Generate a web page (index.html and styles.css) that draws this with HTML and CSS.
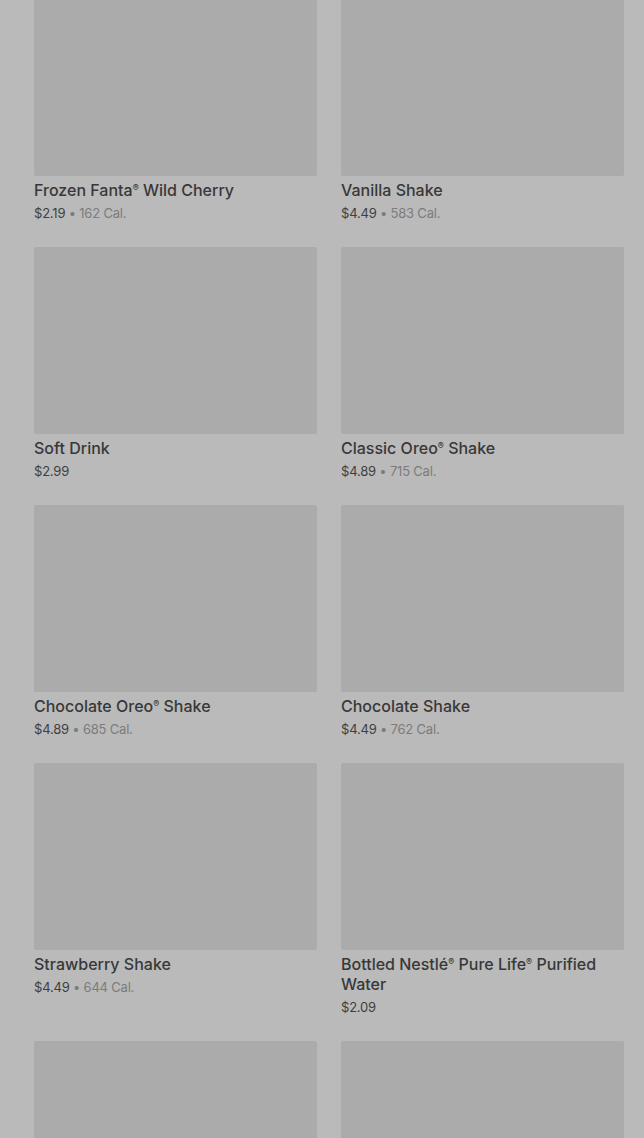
FILE: index.html
```html
<!DOCTYPE html>
<html lang="en">
<head>
    <meta charset="UTF-8">
    <meta name="viewport" content="width=device-width, initial-scale=1.0">
    <title>Drinks</title>
    <link rel="stylesheet" href="styles.css">
</head>
<body>
    <div class="menu-grid">
        <div class="item">
            <div class="item-image"></div>
            <div class="item-name">Frozen Fanta<span class="reg">®</span> Wild Cherry</div>
            <div class="item-meta">$2.19 <span class="cal">• 162 Cal.</span></div>
        </div>
        <div class="item">
            <div class="item-image"></div>
            <div class="item-name">Vanilla Shake</div>
            <div class="item-meta">$4.49 <span class="cal">• 583 Cal.</span></div>
        </div>
        <div class="item">
            <div class="item-image"></div>
            <div class="item-name">Soft Drink</div>
            <div class="item-meta">$2.99</div>
        </div>
        <div class="item">
            <div class="item-image"></div>
            <div class="item-name">Classic Oreo<span class="reg">®</span> Shake</div>
            <div class="item-meta">$4.89 <span class="cal">• 715 Cal.</span></div>
        </div>
        <div class="item">
            <div class="item-image"></div>
            <div class="item-name">Chocolate Oreo<span class="reg">®</span> Shake</div>
            <div class="item-meta">$4.89 <span class="cal">• 685 Cal.</span></div>
        </div>
        <div class="item">
            <div class="item-image"></div>
            <div class="item-name">Chocolate Shake</div>
            <div class="item-meta">$4.49 <span class="cal">• 762 Cal.</span></div>
        </div>
        <div class="item">
            <div class="item-image"></div>
            <div class="item-name">Strawberry Shake</div>
            <div class="item-meta">$4.49 <span class="cal">• 644 Cal.</span></div>
        </div>
        <div class="item">
            <div class="item-image"></div>
            <div class="item-name">Bottled Nestlé<span class="reg">®</span> Pure Life<span class="reg">®</span> Purified Water</div>
            <div class="item-meta">$2.09</div>
        </div>
        <div class="item">
            <div class="item-image"></div>
        </div>
        <div class="item">
            <div class="item-image"></div>
        </div>
    </div>
</body>
</html>
```

FILE: styles.css
```css
html, body {
    height: 100%;
}
body {
    margin: 0;
    background-color: #bababa;
    font-family: Inter, "Noto Sans", sans-serif;
    overflow: hidden;
}
.menu-grid {
    display: grid;
    grid-template-columns: 1fr 1fr;
    column-gap: 24px;
    row-gap: 24px;
    padding: 0 20px 0 34px;
    margin-top: -11px;
}
.item {
    display: flex;
    flex-direction: column;
}
.item-image {
    height: 187px;
    background-color: #ababab;
    border-radius: 2px;
}
.item-name {
    margin-top: 4px;
    font-size: 16px;
    line-height: 20px;
    font-weight: 500;
    color: #383838;
}
.reg {
    font-size: 9px;
    line-height: 9px;
    vertical-align: 5px;
}
.item-meta {
    margin-top: 3px;
    font-size: 13px;
    line-height: 20px;
    color: #3f3f3f;
    letter-spacing: -0.2px;
}
.cal {
    color: #7c7c7c;
}
```
